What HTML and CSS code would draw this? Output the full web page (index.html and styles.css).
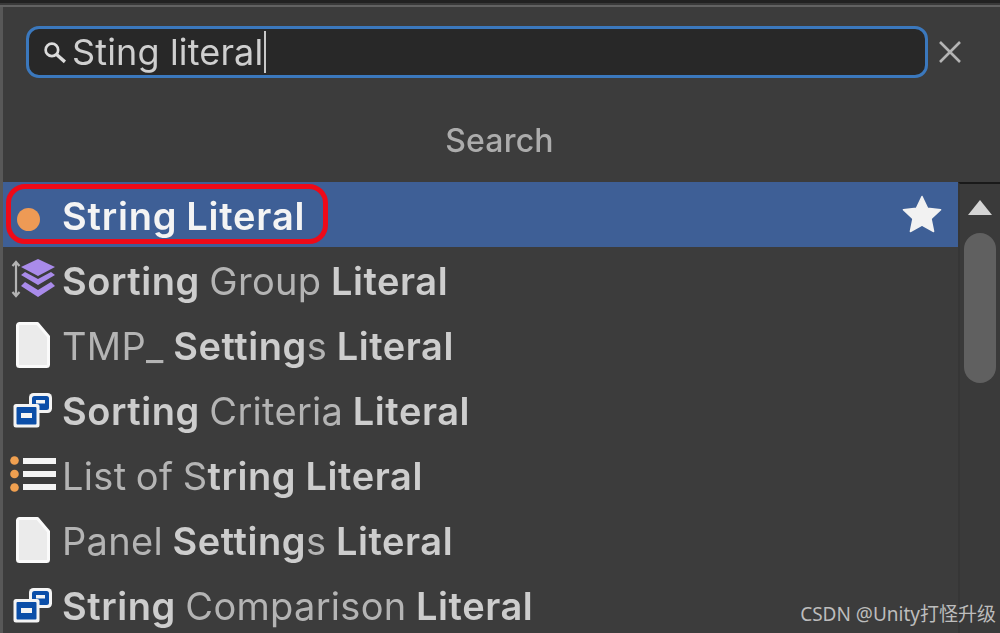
FILE: index.html
```html
<!DOCTYPE html>
<html lang="en">
<head>
<meta charset="utf-8">
<title>Search</title>
<link rel="stylesheet" href="styles.css">
</head>
<body>
<div class="topbar"></div>
<main class="panel">
  <div class="search-row">
    <div class="field">
      <svg class="search-icon" viewBox="0 0 24 24"><circle cx="9.500" cy="9.500" r="6" fill="none" stroke="#dcdcdc" stroke-width="2.600"/><path d="M14 14l8 7" stroke="#dcdcdc" stroke-width="3.200" fill="none"/></svg>
      <span class="query">Sting literal</span><span class="caret"></span>
    </div>
    <svg class="close" viewBox="0 0 22 22"><path d="M1 1l20 20M21 1L1 21" stroke="#b4b4b4" stroke-width="2.600" fill="none"/></svg>
  </div>
  <h1 class="title">Search</h1>
  <div class="results">
    <ul class="list">
      <li class="row selected">
        <span class="slot"><span class="dot"></span></span>
        <span class="label"><b>String Literal</b></span>
        <svg class="star" viewBox="0 0 40 38"><path d="M20 1.500l5.600 11.800 13 1.500-9.600 8.900 2.600 12.800L20 30.200 8.400 36.500 11 23.700 1.400 14.800l13-1.500z" fill="#f2f2f2" stroke="#f2f2f2" stroke-width="1.500" stroke-linejoin="round"/></svg>
        <span class="ring"></span>
      </li>
      <li class="row">
        <span class="slot">
          <svg class="ic ic-layers" viewBox="0 0 44 40"><path d="M5 3v34M1.500 7L5 3l3.500 4M1.500 33L5 37l3.500-4" stroke="#b4b4b4" stroke-width="2.200" fill="none"/><path d="M27 0l17 8-17 9-17-9z" fill="#a98bea"/><path d="M10 16l4-3 13 7 13-7 4 3-17 10z" fill="#a98bea"/><path d="M10 27l4-4 13 8 13-8 4 4-17 11z" fill="#a98bea"/></svg>
        </span>
        <span class="label"><b>Sorting</b> Group <b>Literal</b></span>
      </li>
      <li class="row">
        <span class="slot"><svg class="ic ic-file" viewBox="0 0 34 46"><path class="file-shape" d="M1.500 3.500a2 2 0 0 1 2-2h18l11 13v28a2 2 0 0 1-2 2h-27a2 2 0 0 1-2-2z"/></svg></span>
        <span class="label">TMP_ <b>Setting</b>s <b>Literal</b></span>
      </li>
      <li class="row">
        <span class="slot"><svg class="ic ic-class" viewBox="0 0 40 36"><use href="#cls"/></svg></span>
        <span class="label"><b>Sorting</b> Criteria <b>Literal</b></span>
      </li>
      <li class="row">
        <span class="slot"><svg class="ic ic-list" viewBox="0 0 46 36"><circle cx="4.500" cy="4.500" r="4.300" fill="#f0a050"/><circle cx="4.500" cy="18" r="4.300" fill="#f0a050"/><circle cx="4.500" cy="31.500" r="4.300" fill="#f0a050"/><path d="M13 5h33M13 18h33M13 31h33" stroke="#f4f4f4" stroke-width="6" fill="none"/></svg></span>
        <span class="label">List of S<b>tring</b> <b>Literal</b></span>
      </li>
      <li class="row">
        <span class="slot"><svg class="ic ic-file" viewBox="0 0 34 46"><path class="file-shape" d="M1.500 3.500a2 2 0 0 1 2-2h18l11 13v28a2 2 0 0 1-2 2h-27a2 2 0 0 1-2-2z"/></svg></span>
        <span class="label">Panel <b>Setting</b>s <b>Literal</b></span>
      </li>
      <li class="row">
        <span class="slot"><svg class="ic ic-class" viewBox="0 0 40 36"><use href="#cls"/></svg></span>
        <span class="label"><b>String</b> Comparison <b>Literal</b></span>
      </li>
    </ul>
    <div class="scrollbar">
      <span class="arrow"></span>
      <span class="thumb"></span>
    </div>
  </div>
  <div class="watermark">CSDN @Unity打怪升级</div>
</main>
<svg class="defs" width="0" height="0">
  <defs>
    <g id="cls">
      <rect x="16" y="1" width="23" height="20" rx="4.500" fill="#f4f4f4"/>
      <rect x="19" y="4" width="17" height="14" rx="2.500" fill="#0b4ea8"/>
      <rect x="23" y="8" width="9" height="3.500" fill="#f4f4f4"/>
      <rect x="0.500" y="12" width="26" height="23.500" rx="2.500" fill="#f4f4f4"/>
      <rect x="3.500" y="15" width="20" height="17.500" rx="1" fill="#0b4ea8"/>
      <rect x="8" y="21" width="11" height="5" fill="#f4f4f4"/>
    </g>
  </defs>
</svg>
</body>
</html>
```
FILE: styles.css
```css
* { box-sizing: border-box; }
html, body { margin: 0; height: 100%; overflow: hidden; background: #3c3c3c; }
body {
  font-family: Inter, "Noto Sans", "Noto Sans CJK SC", sans-serif;
  color: #c0c0c0;
  display: flex;
  flex-direction: column;
}
.topbar { height: 7px; flex: none; background: #3a3a3a; border-top: 3px solid #222; border-bottom: 2px solid #626262; }
.panel { position: relative; flex: 1; min-height: 0; border-left: 3px solid #585858; display: flex; flex-direction: column; }

.search-row { display: flex; align-items: center; height: 52px; margin-top: 19px; padding-left: 23px; gap: 11px; flex: none; }
.field { width: 902px; height: 52px; flex: none; background: #282828; border: 3px solid #3b78bd; border-radius: 13px; display: flex; align-items: center; padding-left: 13px; }
.search-icon { width: 25px; height: 25px; flex: none; margin-right: 5px; filter: blur(.5px); }
.query { font-size: 36px; letter-spacing: .15px; color: #cfcfcf; filter: blur(.7px); }
.caret { width: 2px; height: 42px; background: #c8c8c8; flex: none; margin-left: 1px; }
.close { width: 22px; height: 22px; flex: none; filter: blur(.5px); }

.title { margin: 0; height: 104px; flex: none; padding: 38px 4px 0 0; text-align: center; font-size: 32px; letter-spacing: .2px; line-height: 50px; font-weight: 500; color: #acacac; filter: blur(.7px); }

.results { flex: 1; min-height: 0; display: flex; }
.list { list-style: none; margin: 0; padding: 0; flex: 1; min-width: 0; }
.row { position: relative; height: 65px; display: flex; align-items: center; font-size: 38px; letter-spacing: .3px; word-spacing: -1.5px; }
.slot { width: 59px; flex: none; display: flex; align-items: center; justify-content: flex-start; height: 100%; }
.label { white-space: pre; padding-top: 3px; color: #b4b4b4; filter: blur(.75px); }
.label b { font-weight: 600; letter-spacing: .55px; color: #cdcdcd; }
.selected { background: #3e5f96; }
.selected .label b { color: #f4f4f4; font-weight: 600; letter-spacing: .8px; }
.dot { width: 23px; height: 23px; margin-left: 14px; margin-top: 9px; border-radius: 50%; background: #ee9a55; filter: blur(.4px); }
.star { position: absolute; right: 16px; top: 13px; width: 40px; height: 38px; filter: blur(.5px); }
.ring { position: absolute; left: 3px; top: 2px; width: 322px; height: 60px; border: 5px solid #ee0a18; border-radius: 19px; pointer-events: none; filter: blur(.4px); }

.ic { display: block; filter: blur(.5px); }
.ic-layers { width: 44px; height: 40px; margin-left: 8px; margin-top: -2px; }
.ic-file { width: 34px; height: 46px; margin-left: 13px; }
.file-shape { fill: #ebebeb; stroke: #fafafa; stroke-width: 3; stroke-linejoin: round; }
.ic-class { width: 40px; height: 36px; margin-left: 10px; }
.ic-list { width: 46px; height: 36px; margin-left: 7px; margin-top: -2px; }

.scrollbar { width: 42px; flex: none; background: #3a3a3a; border-left: 2px solid #363636; border-top: 2px solid #191919; display: flex; flex-direction: column; align-items: center; }
.arrow { width: 0; height: 0; margin-top: 16px; border-left: 12px solid transparent; border-right: 12px solid transparent; border-bottom: 15px solid #d4d4d4; }
.thumb { width: 32px; height: 150px; margin-top: 18px; border-radius: 16px; background: #606060; }

.watermark { position: absolute; right: 4px; bottom: 6px; font-size: 19px; font-family: "Noto Sans", "Noto Sans CJK SC", sans-serif; color: #bdbdbd; white-space: nowrap; }
.defs { position: absolute; }
```
